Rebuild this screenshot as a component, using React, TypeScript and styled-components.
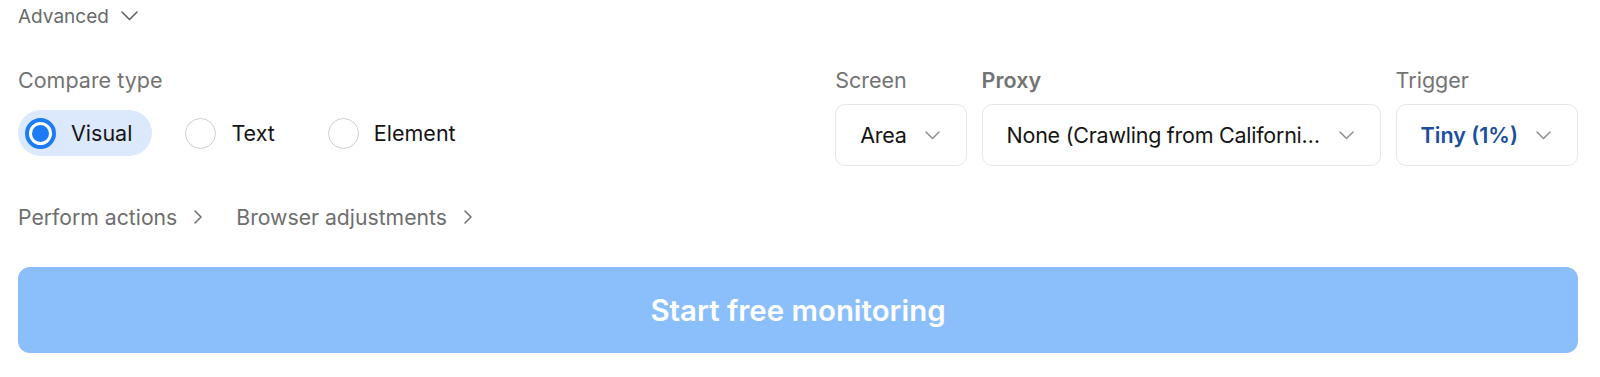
import React, { useState } from "react";
import styled, { createGlobalStyle } from "styled-components";

const Global = createGlobalStyle`
  html, body { margin: 0; padding: 0; background: #ffffff; }
  body { font-family: Inter, "Noto Sans", "Liberation Sans", sans-serif; -webkit-font-smoothing: antialiased; }
  * { box-sizing: border-box; }
`;

const Page = styled.div`
  width: 1600px;
  padding: 3px 22px 24px 18px;
  display: flex;
  flex-direction: column;
`;

const Toggle = styled.div`
  display: flex;
  align-items: center;
  gap: 12px;
  height: 26px;
  font-size: 19px;
  color: #6a6a6a;
`;

const Row = styled.div`
  margin-top: 36px;
  display: flex;
  justify-content: space-between;
  align-items: flex-start;
`;

const Group = styled.div`
  display: flex;
  flex-direction: column;
`;

const Label = styled.div<{ $strong?: boolean }>`
  font-size: 21.5px;
  line-height: 30px;
  height: 30px;
  color: #737373;
  font-weight: ${(p) => (p.$strong ? 600 : 400)};
`;

const Options = styled.div`
  display: flex;
  gap: 26px;
  margin-top: 15px;
`;

const Option = styled.div<{ $active?: boolean }>`
  display: flex;
  align-items: center;
  gap: 15px;
  height: 46px;
  padding: 0 20px 0 7px;
  border-radius: 23px;
  background: ${(p) => (p.$active ? "#dce8fb" : "transparent")};
  font-size: 21.5px;
  color: #141414;
  cursor: pointer;
`;

const Radio = styled.span<{ $checked?: boolean }>`
  width: 31px;
  height: 31px;
  border-radius: 50%;
  flex: none;
  background: #ffffff;
  border: ${(p) => (p.$checked ? "4px solid #1b7cf4" : "1.5px solid #cfcfcf")};
  display: flex;
  align-items: center;
  justify-content: center;
  &::after {
    content: "";
    display: ${(p) => (p.$checked ? "block" : "none")};
    width: 17px;
    height: 17px;
    border-radius: 50%;
    background: #1b7cf4;
  }
`;

const Selects = styled.div`
  display: flex;
  gap: 15px;
`;

const Select = styled.div<{ $width?: number }>`
  margin-top: 9px;
  height: 62px;
  width: ${(p) => (p.$width ? `${p.$width}px` : "auto")};
  display: flex;
  align-items: center;
  gap: 18px;
  padding: 0 26px 0 24px;
  border: 1px solid #e6e6e6;
  border-radius: 10px;
  background: #fff;
  cursor: pointer;
`;

const Value = styled.span<{ $accent?: boolean }>`
  flex: 1;
  min-width: 0;
  white-space: nowrap;
  overflow: hidden;
  text-overflow: ellipsis;
  font-size: 21.5px;
  letter-spacing: ${(p) => (p.$accent ? "0" : "-0.25px")};
  color: ${(p) => (p.$accent ? "#1a4e9f" : "#141414")};
  font-weight: ${(p) => (p.$accent ? 600 : 400)};
`;

const Links = styled.div`
  margin-top: 36px;
  height: 30px;
  display: flex;
  align-items: center;
  gap: 34px;
`;

const LinkItem = styled.div`
  display: flex;
  align-items: center;
  gap: 17px;
  font-size: 21.2px;
  color: #6e6e6e;
  cursor: pointer;
`;

const StartButton = styled.button`
  margin-top: 35px;
  width: 100%;
  height: 86px;
  border: none;
  border-radius: 12px;
  background: #8abffc;
  color: #ffffff;
  font-family: inherit;
  font-size: 29.4px;
  font-weight: 600;
  cursor: pointer;
`;

const ChevronDown = ({ w = 15, color = "#8f8f8f" }: { w?: number; color?: string }) => (
  <svg width={w} height={Math.round(w / 2) + 1} viewBox={`0 0 ${w} ${Math.round(w / 2) + 1}`} fill="none" style={{ flex: "none" }}>
    <polyline points={`1,1 ${w / 2},${w / 2} ${w - 1},1`} stroke={color} strokeWidth={1.5} strokeLinecap="round" strokeLinejoin="round" />
  </svg>
);

const ChevronRight = () => (
  <svg width="8" height="14" viewBox="0 0 8 14" fill="none">
    <polyline points="1,1 7,7 1,13" stroke="#6e6e6e" strokeWidth={1.5} strokeLinecap="round" strokeLinejoin="round" />
  </svg>
);

export default function App() {
  const [type, setType] = useState("Visual");
  return (
    <Page>
      <Global />
      <Toggle>
        Advanced
        <ChevronDown w={17} color="#5e5e5e" />
      </Toggle>
      <Row>
        <Group>
          <Label>Compare type</Label>
          <Options>
            {["Visual", "Text", "Element"].map((t) => (
              <Option key={t} $active={type === t} onClick={() => setType(t)}>
                <Radio $checked={type === t} />
                {t}
              </Option>
            ))}
          </Options>
        </Group>
        <Selects>
          <Group>
            <Label>Screen</Label>
            <Select>
              <Value>Area</Value>
              <ChevronDown />
            </Select>
          </Group>
          <Group>
            <Label $strong>Proxy</Label>
            <Select $width={399}>
              <Value>None (Crawling from California, USA)</Value>
              <ChevronDown />
            </Select>
          </Group>
          <Group>
            <Label>Trigger</Label>
            <Select>
              <Value $accent>Tiny (1%)</Value>
              <ChevronDown />
            </Select>
          </Group>
        </Selects>
      </Row>
      <Links>
        <LinkItem>
          Perform actions
          <ChevronRight />
        </LinkItem>
        <LinkItem>
          Browser adjustments
          <ChevronRight />
        </LinkItem>
      </Links>
      <StartButton>Start free monitoring</StartButton>
    </Page>
  );
}
